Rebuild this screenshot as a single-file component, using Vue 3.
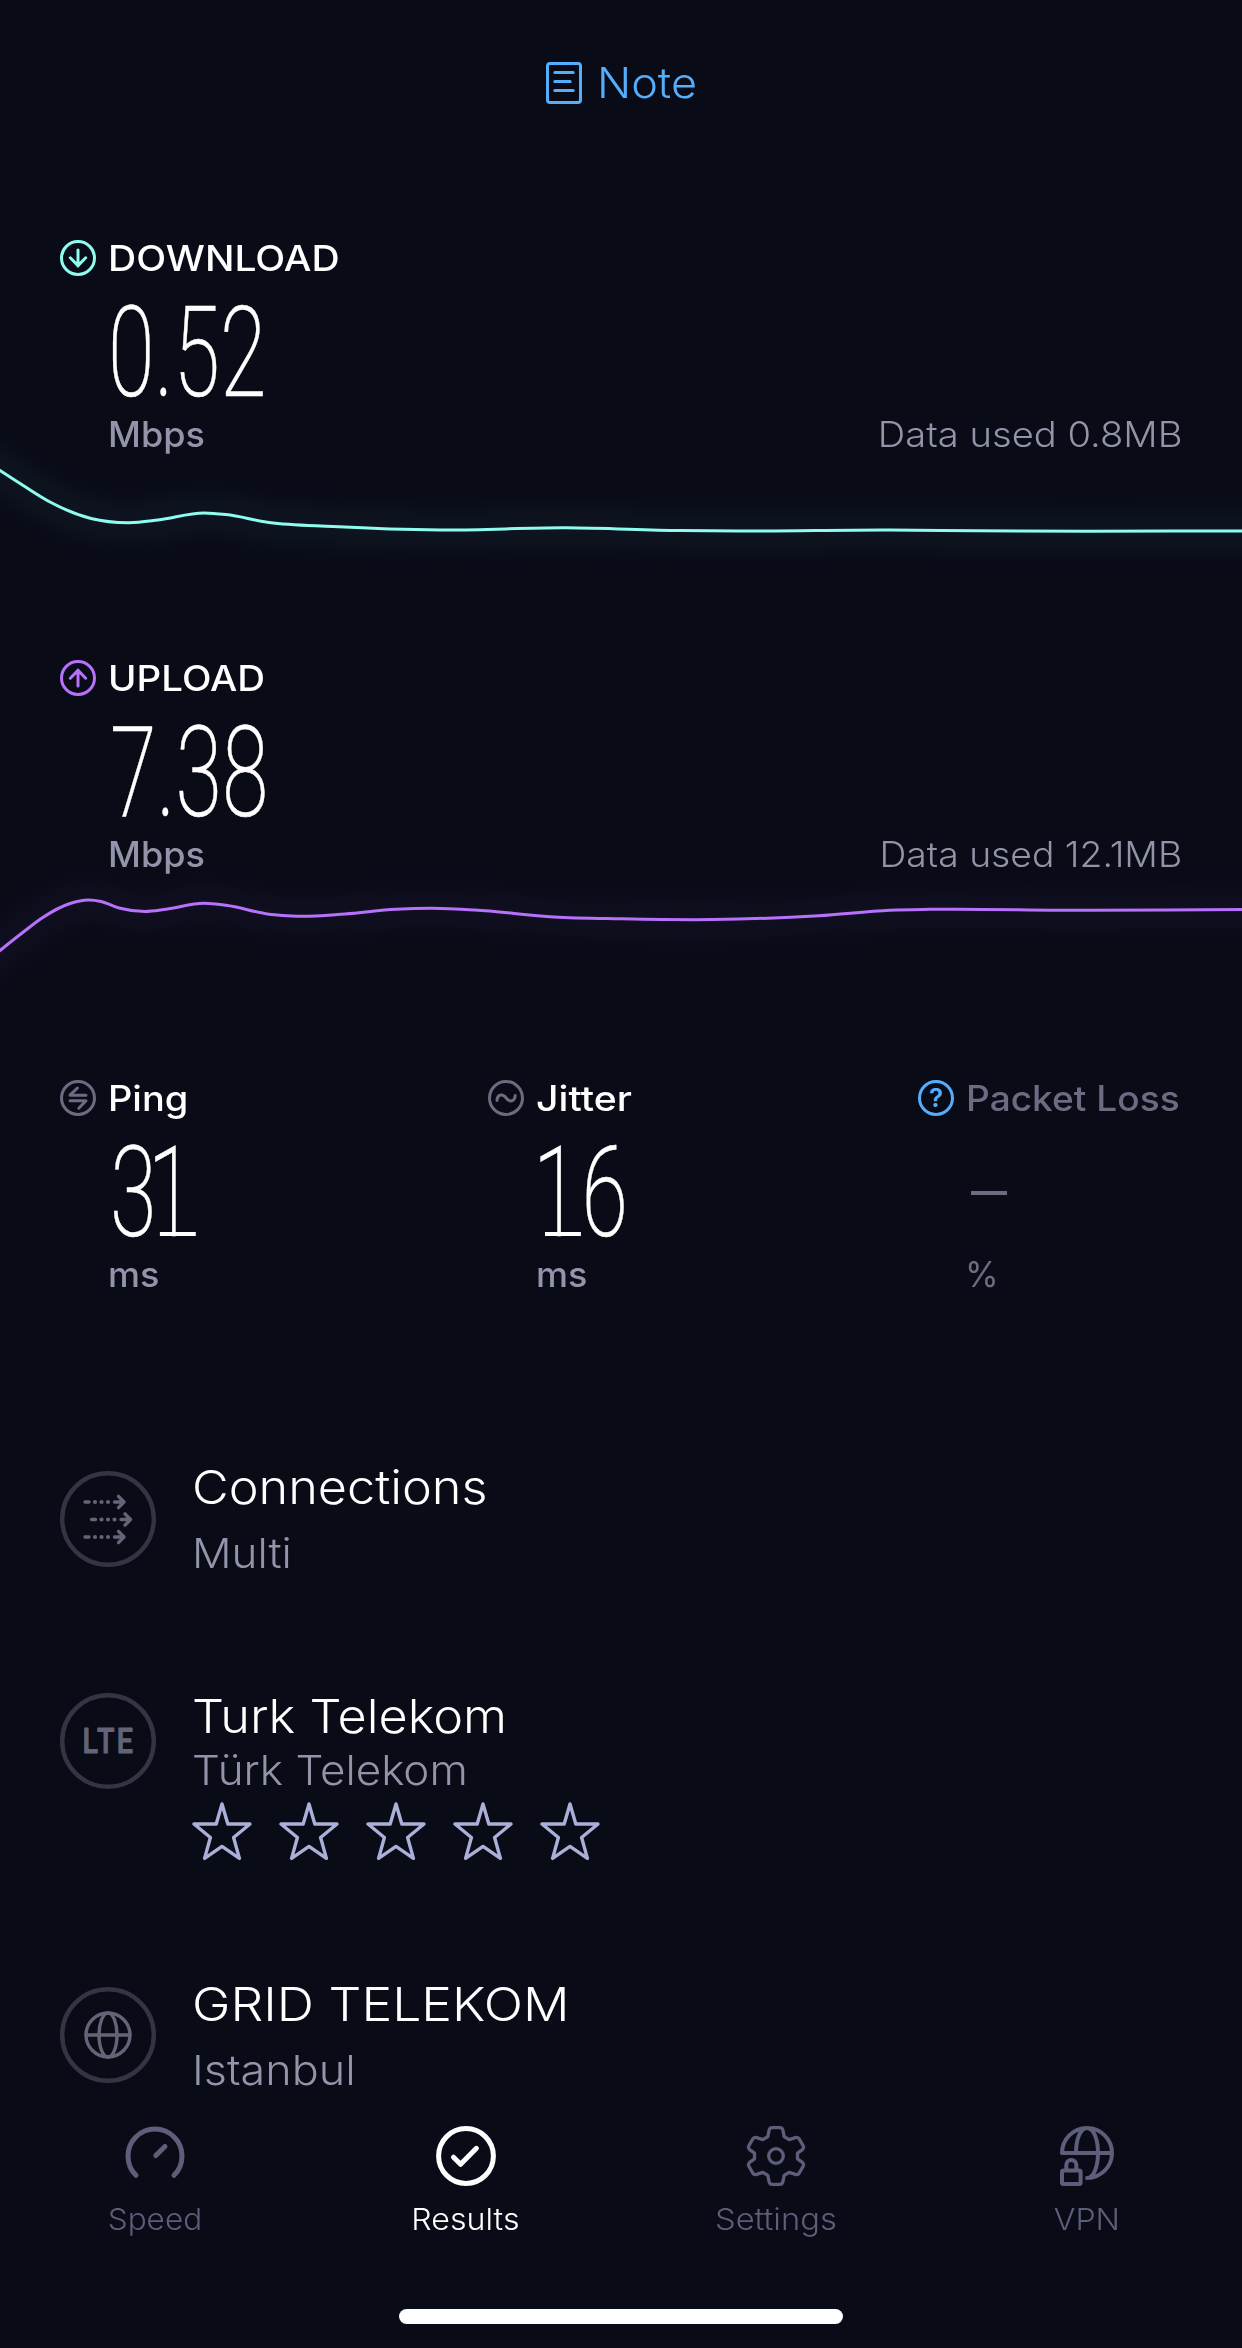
<script setup>
import { ref } from 'vue';

// speed samples over time, [x, y] inside the chart box
const transfers = [
  {
    id: 'download',
    label: 'DOWNLOAD',
    value: '0.52',
    used: '0.8MB',
    arrow: 'M18 10V26M10.3 17.8L18 25.6L25.7 17.8',
    points: [[-20, 5], [0, 18.5], [24, 34], [51, 50.5], [91, 66.5], [129, 70.7], [158, 68], [204, 61], [226, 62.6], [269, 70.5], [333, 74.5], [440, 78], [566, 75.8], [680, 78.6], [740, 79], [890, 78], [977, 78.8], [1242, 79], [1262, 79]]
  },
  {
    id: 'upload',
    label: 'UPLOAD',
    value: '7.38',
    used: '12.1MB',
    arrow: 'M18 26V10M10.3 18.2L18 10.4L25.7 18.2',
    points: [[-20, 95], [0, 78.5], [24, 59.5], [42, 46], [70, 31.5], [88, 28], [101, 29.5], [119, 36], [145, 39.5], [166, 37.3], [204, 31.3], [226, 33.3], [269, 42.2], [297, 44.3], [345, 42], [396, 37.3], [432, 36.3], [475, 38], [554, 45], [621, 46.8], [712, 47.6], [819, 43.7], [890, 38.2], [930, 37.3], [1076, 38.3], [1242, 37.6], [1262, 37.6]]
  }
];

const metrics = [
  { id: 'ping', label: 'Ping', value: '31', unit: 'ms' },
  { id: 'jitter', label: 'Jitter', value: '16', unit: 'ms' },
  { id: 'loss', label: 'Packet Loss', value: null, unit: '%' }
];

const tabs = [
  { id: 'speed', label: 'Speed' },
  { id: 'results', label: 'Results' },
  { id: 'settings', label: 'Settings' },
  { id: 'vpn', label: 'VPN' }
];

const activeTab = ref('results');
const arrowRows = [{ x: 0, y: 31 }, { x: 6.5, y: 48.5 }, { x: 0, y: 66 }];

const slope = (a, b) => (b[1] - a[1]) / (b[0] - a[0]);

const tangent = (points, i) => {
  const prev = points[i - 1];
  const next = points[i + 1];
  if (!prev) return slope(points[i], next);
  if (!next) return slope(prev, points[i]);
  const h0 = points[i][0] - prev[0];
  const h1 = next[0] - points[i][0];
  return (h1 * slope(prev, points[i]) + h0 * slope(points[i], next)) / (h0 + h1);
};

// smooth line through the samples
const linePath = (points) => {
  let d = `M${points[0][0]} ${points[0][1]}`;
  for (let i = 0; i < points.length - 1; i++) {
    const a = points[i];
    const b = points[i + 1];
    const dx = (b[0] - a[0]) / 3;
    d += `C${a[0] + dx} ${a[1] + tangent(points, i) * dx} ${b[0] - dx} ${b[1] - tangent(points, i + 1) * dx} ${b[0]} ${b[1]}`;
  }
  return d;
};
</script>

<template>
  <div class="page">
    <header class="note">
      <svg class="note-icon" viewBox="0 0 36 42">
        <rect x="1.5" y="1.5" width="33" height="39" rx="2.5" />
        <path d="M8.8 10.4H27.2M8.8 19.4H24.2M8.8 28.4H27.2" />
      </svg>
      <span class="wide">Note</span>
    </header>

    <section v-for="item in transfers" :key="item.id" class="transfer" :class="item.id">
      <div class="label">
        <svg class="badge" viewBox="0 0 36 36">
          <circle cx="18" cy="18" r="16.5" />
          <path :d="item.arrow" />
        </svg>
        <span class="wide">{{ item.label }}</span>
      </div>
      <div class="value"><span class="digits">{{ item.value }}</span></div>
      <div class="units">
        <span class="unit wide">Mbps</span>
        <span class="used wide">Data used {{ item.used }}</span>
      </div>
      <svg class="chart" viewBox="0 0 1242 208">
        <path class="glow" :d="linePath(item.points)" />
        <path class="line" :d="linePath(item.points)" />
      </svg>
    </section>

    <section class="metrics">
      <div v-for="metric in metrics" :key="metric.id" class="metric" :class="metric.id">
        <div class="label">
          <svg class="badge" viewBox="0 0 36 36">
            <circle cx="18" cy="18" r="16.5" />
            <path v-if="metric.id === 'ping'" d="M17.4 8L10 15.2H26M10 20.7H26L18.8 28.2" />
            <path v-else-if="metric.id === 'jitter'" d="M9 20.5C9.5 13.6 15 13.6 18.2 18C21.4 22.4 26.8 22 27.2 15.5" />
            <text v-else x="18" y="27.4" text-anchor="middle">?</text>
          </svg>
          <span class="wide">{{ metric.label }}</span>
        </div>
        <div class="value">
          <span v-if="metric.value" class="digits"><span v-for="(digit, i) in metric.value" :key="i" :class="digit === '1' ? 'one' : ''">{{ digit }}</span></span>
          <i v-else class="dash"></i>
        </div>
        <div class="units"><span class="unit wide">{{ metric.unit }}</span></div>
      </div>
    </section>

    <section class="details">
      <div class="detail connections">
        <svg class="ring" viewBox="0 0 96 96">
          <circle class="outline" cx="48" cy="48" r="45.8" />
          <g v-for="row in arrowRows" :key="row.y" :transform="`translate(${row.x} ${row.y})`">
            <path d="M25 0H29M54.5 0H63.5M58.5 -5.6L64 0L58.5 5.6" />
            <path class="dots" d="M35 0H35.01M41.5 0H41.51M48 0H48.01" />
          </g>
        </svg>
        <div class="info">
          <div class="title wide">Connections</div>
          <div class="sub wide">Multi</div>
        </div>
      </div>

      <div class="detail carrier">
        <svg class="ring" viewBox="0 0 96 96">
          <circle class="outline" cx="48" cy="48" r="45.8" />
          <text x="22.5" y="60" textLength="53" lengthAdjust="spacingAndGlyphs">LTE</text>
        </svg>
        <div class="info">
          <div class="title wide">Turk Telekom</div>
          <div class="sub wide">Türk Telekom</div>
          <div class="stars">
            <svg v-for="n in 5" :key="n" viewBox="0 0 60 60">
              <path d="M30 2L35.8 22H58L41.6 35.5L47.4 56.4L30 44.4L12.6 56.4L18.4 35.5L2 22H24.2Z" />
            </svg>
          </div>
        </div>
      </div>

      <div class="detail server">
        <svg class="ring" viewBox="0 0 96 96">
          <circle class="outline" cx="48" cy="48" r="45.8" />
          <circle cx="48" cy="48" r="22" />
          <ellipse cx="48" cy="48" rx="9" ry="22" />
          <path d="M26 48H70" />
        </svg>
        <div class="info">
          <div class="title wide">GRID TELEKOM</div>
          <div class="sub wide">Istanbul</div>
        </div>
      </div>
    </section>

    <nav class="tabs">
      <div v-for="tab in tabs" :key="tab.id" class="tab" :class="[tab.id, activeTab === tab.id ? 'active' : '']" @click="activeTab = tab.id">
        <svg v-if="tab.id === 'speed'" viewBox="0 0 60 60">
          <path d="M11 49.3A27 27 0 1 1 49 49.3M30.8 29.6L40 20.4" />
        </svg>
        <svg v-else-if="tab.id === 'results'" viewBox="0 0 60 60">
          <circle cx="30" cy="30" r="27.4" />
          <path d="M17.5 31.2L24.6 38.3L40.4 22.3" />
        </svg>
        <svg v-else-if="tab.id === 'settings'" viewBox="0 0 60 60">
          <path d="M26.3 1.7H33.7Q36.4 1.7 36.9 4.3L38.2 10.6L43.2 13.6L49.4 11.6Q52 10.8 53.3 13.1L57 19.5Q58.3 21.8 56.4 23.6L51.5 27.2V32.8L56.4 36.4Q58.3 38.2 57 40.5L53.3 46.9Q52 49.2 49.4 48.4L43.2 46.4L38.2 49.4L36.9 55.7Q36.4 58.3 33.7 58.3H26.3Q23.6 58.3 23.1 55.7L21.8 49.4L16.8 46.4L10.6 48.4Q8 49.2 6.7 46.9L3 40.5Q1.7 38.2 3.6 36.4L8.5 32.8V27.2L3.6 23.6Q1.7 21.8 3 19.5L6.7 13.1Q8 10.8 10.6 11.6L16.8 13.6L21.8 10.6L23.1 4.3Q23.6 1.7 26.3 1.7Z" />
          <circle cx="30" cy="30" r="7.3" />
        </svg>
        <svg v-else viewBox="-3 0 60 60">
          <path d="M27 52A25 25 0 1 0 2 27H52M16 27C16 13 20.5 2 27 2C33.5 2 38 13 38 27C38 41 33.5 52 27 52" />
          <rect x="2" y="44.6" width="18.6" height="13.4" rx="1.5" />
          <path d="M6.3 44V39A5 5 0 0 1 16.3 39V44" />
        </svg>
        <span class="wide">{{ tab.label }}</span>
      </div>
    </nav>
    <div class="home-bar"></div>
  </div>
</template>

<style>
body {
  background: #090b17;
}
</style>

<style scoped>
.page {
  width: 1242px;
  height: 2348px;
  display: flex;
  flex-direction: column;
  overflow: hidden;
  background: #090b17;
  color: #fff;
  font-family: Inter, "Liberation Sans", sans-serif;
  font-weight: 360;
}
svg {
  flex: none;
  display: block;
  fill: none;
  stroke: currentColor;
  stroke-width: 3;
  stroke-linecap: round;
  stroke-linejoin: round;
}

/* stretched glyphs, --stretch is set per text */
.wide {
  transform: scaleX(var(--stretch, 1.072));
  transform-origin: left;
}

.note {
  height: 178px;
  padding: 62px 5px 0 0;
  display: flex;
  justify-content: center;
  gap: 15px;
  color: #55aefc;
  font-size: 42px;
  line-height: 41px;
}
.note-icon {
  width: 36px;
  height: 42px;
}

.transfer {
  height: 420px;
}
.label {
  height: 36px;
  display: flex;
  align-items: center;
  gap: 12px;
  font-size: 35px;
  font-weight: 500;
  line-height: 36px;
}
.badge {
  width: 36px;
  height: 36px;
}
.transfer .label {
  padding-left: 60px;
}
.download .label {
  --stretch: 1.115;
}
.upload .label {
  --stretch: 1.1;
}
.download .badge {
  color: #8ffcf0;
}
.upload .badge {
  color: #b771fa;
}
.value {
  height: 120px;
  margin-top: 17px;
  display: flex;
  font-family: Roboto, "Liberation Sans", sans-serif;
  font-size: 127px;
  font-weight: 200;
  font-kerning: none;
  line-height: 120px;
  -webkit-text-stroke: 0.5px #fff;
}
.digits {
  transform: scaleX(0.665);
  transform-origin: left;
}
.one {
  display: inline-block;
  position: relative;
  transform: translateX(-13px);
}
.one::after {
  content: "";
  position: absolute;
  top: 99px;
  left: 18px;
  width: 54px;
  height: 4px;
  background: currentColor;
}
.transfer .value {
  padding-left: 108px;
}
.upload .value {
  padding-left: 110px;
}
.units {
  height: 36px;
  margin-top: 3px;
  display: flex;
  justify-content: space-between;
  color: #9394aa;
  font-size: 35px;
  line-height: 36px;
}
.unit {
  --stretch: 1.03;
  font-weight: 500;
}
.used {
  --stretch: 1.09;
  transform-origin: right;
}
.upload .used {
  --stretch: 1.065;
}
.transfer .units {
  padding: 0 60px 0 108px;
}
.chart {
  width: 1242px;
  height: 208px;
  overflow: visible;
}
.download .chart {
  color: #8ffcf0;
}
.upload .chart {
  color: #b771fa;
}
.glow {
  stroke-width: 36;
  opacity: 0.045;
  filter: blur(13px);
}

.metrics {
  display: grid;
  grid-template-columns: 428px 430px 1fr;
  height: 377px;
  padding-left: 60px;
}
.metric .value {
  padding-left: 50px;
}
.jitter .value {
  padding-left: 47px;
}
.jitter .one {
  transform: translateX(-3px);
}
.metric .units {
  padding-left: 48px;
}
.metric .badge {
  color: #6c6b82;
}
.ping .label {
  --stretch: 1.085;
}
.jitter .label {
  --stretch: 1.12;
}
.loss .label,
.loss .unit {
  color: #6c6b82;
}
.loss .label {
  --stretch: 1.06;
}
.metric.loss .badge {
  color: #55aefc;
}
.loss .unit {
  --stretch: 0.98;
  margin-left: -1px;
  font-weight: 400;
}
.badge text {
  fill: currentColor;
  stroke: none;
  font-size: 26px;
  font-weight: 600;
}
.dash {
  width: 36px;
  height: 4px;
  margin: 58px 0 0 3px;
  background: #6c6b82;
}

.detail {
  height: 230px;
  padding-left: 60px;
  display: flex;
  gap: 36px;
}
.carrier {
  height: 287px;
}
.server {
  height: 152px;
}
.ring {
  width: 96px;
  height: 96px;
  margin-top: 14px;
  color: #636477;
  stroke-width: 3.4;
}
.carrier .ring {
  margin-top: 6px;
}
.server .ring {
  margin-top: 13px;
}
.outline {
  stroke: #333543;
  stroke-width: 4.4;
}
.dots {
  stroke-width: 4.2;
}
.ring text {
  fill: currentColor;
  stroke-width: 1;
  font-family: Roboto, sans-serif;
  font-size: 35px;
  font-weight: 500;
  letter-spacing: 3px;
}
.title {
  font-size: 47px;
  line-height: 60px;
}
.carrier .title {
  line-height: 58px;
}
.server .title {
  --stretch: 1.1;
}
.sub {
  margin-top: 16px;
  color: #9394aa;
  font-size: 41px;
  line-height: 40px;
}
.carrier .sub {
  margin-top: 5px;
}
.server .sub {
  --stretch: 1.095;
}
.stars {
  display: flex;
  gap: 27px;
  margin-top: 12px;
  color: #abb0d9;
}
.stars svg {
  width: 60px;
  height: 60px;
  stroke-width: 3.4;
}

.tabs {
  display: grid;
  grid-template-columns: repeat(4, 1fr);
  color: #5e5e7b;
  font-size: 30px;
  line-height: 36px;
}
.tab {
  display: flex;
  flex-direction: column;
  align-items: center;
  gap: 15px;
  cursor: pointer;
}
.tab svg {
  width: 60px;
  height: 60px;
  stroke-width: 5;
}
.tab .wide {
  transform-origin: center;
}
.tab.speed {
  --stretch: 1.05;
}
.tab.settings {
  --stretch: 1.09;
}
.tab.settings svg {
  stroke-width: 3.3;
}
.tab.vpn svg {
  stroke-width: 4;
}
.active {
  color: #fff;
}
.home-bar {
  width: 444px;
  height: 15px;
  margin: 72px auto 0;
  border-radius: 8px;
  background: #fff;
}
</style>
